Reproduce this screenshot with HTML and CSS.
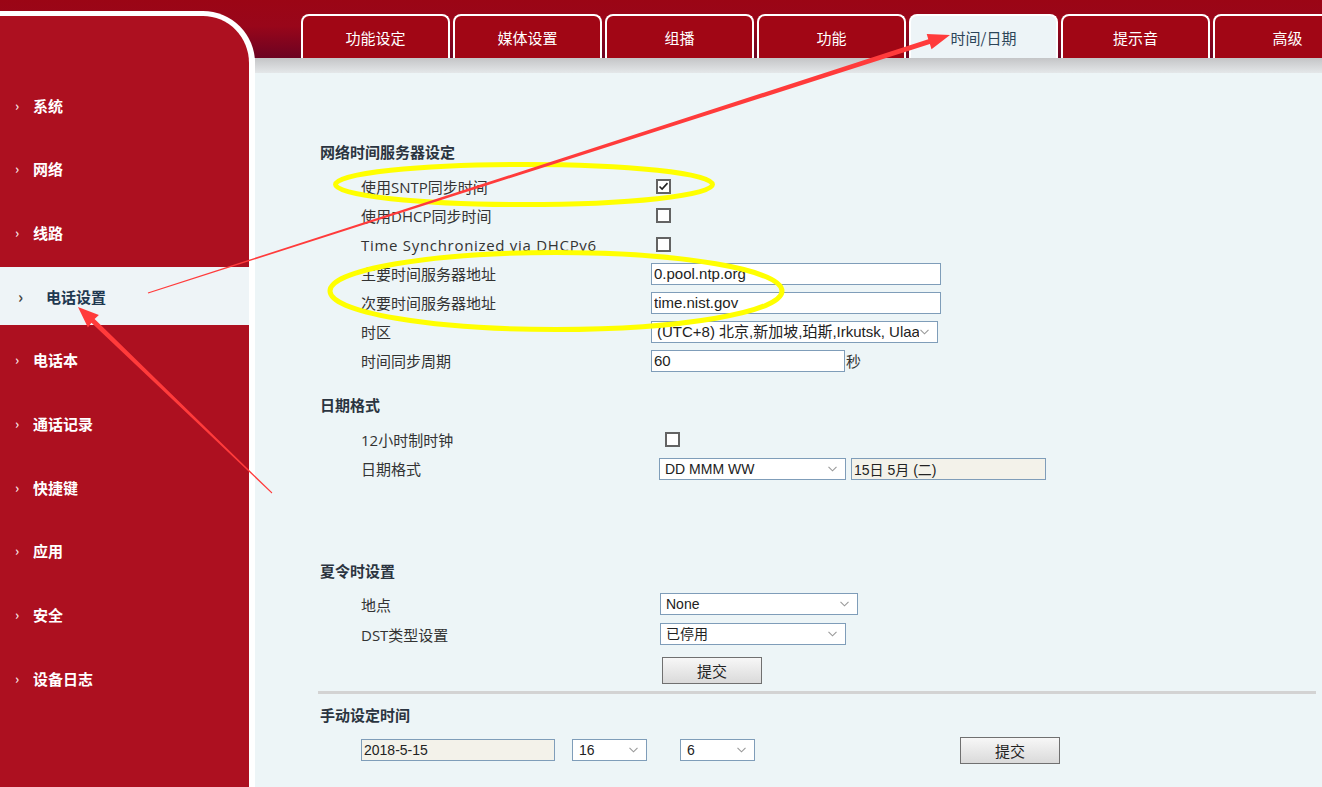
FILE: index.html
```html
<!DOCTYPE html>
<html lang="zh-CN">
<head>
  <meta charset="UTF-8">
  <title>电话设置 - 时间/日期</title>
  <link rel="stylesheet" href="styles.css">
</head>
<body>

<div class="page">
  <aside class="sidebar">
    <ul class="menu">
      <li><span class="arrow">›</span>系统</li>
      <li><span class="arrow">›</span>网络</li>
      <li><span class="arrow">›</span>线路</li>
      <li class="active"><span class="arrow">›</span>电话设置</li>
      <li><span class="arrow">›</span>电话本</li>
      <li><span class="arrow">›</span>通话记录</li>
      <li><span class="arrow">›</span>快捷键</li>
      <li><span class="arrow">›</span>应用</li>
      <li><span class="arrow">›</span>安全</li>
      <li><span class="arrow">›</span>设备日志</li>
    </ul>
  </aside>

  <div class="main">
    <ul class="tabs">
      <li>功能设定</li>
      <li>媒体设置</li>
      <li>组播</li>
      <li>功能</li>
      <li class="active">时间/日期</li>
      <li>提示音</li>
      <li>高级</li>
    </ul>
    <div class="tab-shadow"></div>

    <div class="content">
      <h3>网络时间服务器设定</h3>
      <div class="row">
        <label class="label">使用SNTP同步时间</label>
        <input type="checkbox" class="check" checked>
      </div>
      <div class="row">
        <label class="label">使用DHCP同步时间</label>
        <input type="checkbox" class="check">
      </div>
      <div class="row">
        <label class="label latin">Time Synchronized via DHCPv6</label>
        <input type="checkbox" class="check">
      </div>
      <div class="row">
        <label class="label">主要时间服务器地址</label>
        <input type="text" class="text w-server" value="0.pool.ntp.org">
      </div>
      <div class="row">
        <label class="label">次要时间服务器地址</label>
        <input type="text" class="text w-server" value="time.nist.gov">
      </div>
      <div class="row">
        <label class="label">时区</label>
        <select class="w-zone">
          <option>(UTC+8) 北京,新加坡,珀斯,Irkutsk, Ulaanbaatar</option>
        </select>
      </div>
      <div class="row">
        <label class="label">时间同步周期</label>
        <input type="text" class="text w-period" value="60"><span class="unit">秒</span>
      </div>

      <h3 class="sec-date">日期格式</h3>
      <div class="row wide">
        <label class="label">12小时制时钟</label>
        <input type="checkbox" class="check">
      </div>
      <div class="row wide">
        <label class="label">日期格式</label>
        <select class="w-format">
          <option>DD MMM WW</option>
        </select>
        <input type="text" class="text readonly w-preview" value="15日 5月 (二)" readonly>
      </div>

      <h3 class="sec-dst">夏令时设置</h3>
      <div class="row tall wider">
        <label class="label">地点</label>
        <select class="w-place"><option>None</option></select>
      </div>
      <div class="row tall wider">
        <label class="label">DST类型设置</label>
        <select class="w-dst"><option>已停用</option></select>
      </div>
      <div class="submit-line">
        <button class="btn">提交</button>
      </div>

      <hr class="divider">

      <h3 class="sec-manual">手动设定时间</h3>
      <div class="manual">
        <input type="text" class="text readonly w-date" value="2018-5-15" readonly>
        <select class="w-small"><option>16</option></select>
        <select class="w-small"><option>6</option></select>
        <button class="btn manual-btn">提交</button>
      </div>
    </div>
  </div>
</div>

<!-- screenshot markup: arrows and highlight rings -->
<svg class="marks" width="1322" height="787" viewBox="0 0 1322 787">
  <ellipse cx="524" cy="184.5" rx="188.5" ry="20" fill="none" stroke="#ffff00" stroke-width="5"/>
  <ellipse cx="556" cy="291" rx="226" ry="38.5" fill="none" stroke="#ffff00" stroke-width="5"/>
  <polygon fill="#ff3b3b" points="147.8,292.5 928.3,39.3 926.7,34.1 950,35 931.5,49.3 929.9,44.1 148.2,293.5"/>
  <polygon fill="#ff3b3b" points="272.3,492.6 94.6,319.1 98.9,315.0 78,307 87.9,327.6 91.4,322.7 271.7,493.4"/>
</svg>

</body>
</html>
```

FILE: styles.css
```css
html, body {
  margin: 0;
  height: 787px;
  overflow: hidden;
}
body {
  position: relative;
  font-family: "Noto Sans CJK SC", sans-serif;
  background: linear-gradient(#9b0515, #99061a 45%, #6c0322) top left / 100% 58px no-repeat, #edf5f7;
}
.page {
  display: flex;
  height: 787px;
}

/* left menu */
.sidebar {
  box-sizing: border-box;
  width: 255px;
  flex: none;
  margin-top: 11px;
  height: 776px;
  background-color: #ad1020;
  border-top: 5px solid #fff;
  border-right: 6px solid #fff;
  border-top-right-radius: 52px;
}
.menu {
  list-style: none;
  margin: 0;
  padding: 60px 0 0 0;
}
.menu li {
  display: flex;
  align-items: center;
  height: 58px;
  margin-bottom: 5.7px;
  padding-left: 15px;
  color: #fff;
  font-size: 15px;
  font-weight: bold;
}
.menu .arrow {
  width: 18px;
  font-size: 13px;
  color: #f3dede;
}
.menu li.active {
  background-color: #eef4f7;
  color: #1f3850;
  padding-left: 18px;
}
.menu li.active .arrow {
  width: 28px;
  color: #444;
  font-size: 16px;
}

/* tabs */
.main {
  flex: 1;
  min-width: 0;
}
.tabs {
  list-style: none;
  display: flex;
  gap: 3px;
  margin: 14px 0 0 0;
  padding: 0 0 0 46px;
  height: 44px;
  overflow: hidden;
}
.tabs li {
  box-sizing: border-box;
  flex: none;
  width: 149px;
  height: 44px;
  border: 2px solid #fff;
  border-bottom: none;
  border-radius: 8px 8px 0 0;
  background-color: #a10615;
  color: #fff;
  font-size: 15px;
  text-align: center;
  line-height: 44px;
}
.tabs li.active {
  background-color: #edf4f7;
  color: #2c4559;
}
.tab-shadow {
  height: 15px;
  background: linear-gradient(#c4c5c7, #e4e7e9);
}

/* form */
.content {
  padding: 69px 6px 0 65px;
  color: #333;
  font-size: 15px;
}
h3 {
  margin: 0 0 10px 0;
  height: 20px;
  line-height: 20px;
  font-size: 15px;
  font-weight: bold;
  color: #2b3440;
}
.sec-date { margin-top: 20px; }
.sec-dst { margin-top: 78px; margin-bottom: 8px; }
.sec-manual { margin-top: 11px; }

.row {
  display: flex;
  align-items: center;
  height: 29px;
}
.row.tall { height: 30px; }
.label {
  box-sizing: border-box;
  width: 331px;
  padding-left: 41px;
  font-family: "Open Sans", "Noto Sans CJK SC", sans-serif;
  color: #333;
}
.label.latin { letter-spacing: 0.7px; }
.row.wide .label { width: 339px; }
.row.wider .label { width: 340px; }

.check {
  appearance: none;
  -webkit-appearance: none;
  box-sizing: border-box;
  width: 15px;
  height: 15px;
  margin: 0 0 0 5px;
  border: 2px solid #636363;
  background: #fff;
}
.row.wide .check { margin-left: 6px; }
.check:checked {
  background: #fff url("data:image/svg+xml,%3Csvg xmlns='http://www.w3.org/2000/svg' width='11' height='11'%3E%3Cpath d='M1.5 5.5l2.6 2.6 5.4-6' fill='none' stroke='%23222' stroke-width='1.6'/%3E%3C/svg%3E") center no-repeat;
}

.text, select {
  box-sizing: border-box;
  height: 22px;
  margin: 0;
  border: 1px solid #7f9db9;
  background-color: #fff;
  color: #222;
  font-family: "Liberation Sans", "Noto Sans CJK SC", sans-serif;
  font-size: 15px;
  padding: 0 2px;
  outline: none;
}
select {
  appearance: none;
  -webkit-appearance: none;
  padding: 0 18px 0 5px;
  font-size: 14px;
  background: #fff url("data:image/svg+xml,%3Csvg xmlns='http://www.w3.org/2000/svg' width='9' height='6'%3E%3Cpath d='M0.5 0.8l4 4 4-4' fill='none' stroke='%23999' stroke-width='1.1'/%3E%3C/svg%3E") right 8px center no-repeat;
}
.readonly {
  background-color: #f3f2ea;
  font-size: 14px;
}
.w-server { width: 290px; }
.w-zone { width: 287px; font-size: 15px; }
.w-period { width: 194px; }
.unit { margin-left: 1px; }
.w-format { width: 187px; }
.w-preview { width: 195px; margin-left: 5px; }
.w-place { width: 198px; }
.w-dst { width: 186px; }

.submit-line {
  margin-top: 8px;
  padding-left: 342px;
}
.btn {
  box-sizing: border-box;
  width: 100px;
  height: 27px;
  border: 1px solid #707070;
  background: linear-gradient(#f7f7f7, #dadada);
  color: #222;
  font-family: "Noto Sans CJK SC", sans-serif;
  font-size: 15px;
  padding: 0;
}
.divider {
  margin: 7px 0 0 -2px;
  height: 3px;
  border: none;
  background-color: #d3d3d3;
}

.manual {
  display: flex;
  align-items: center;
  height: 30px;
  margin-top: 10px;
  padding-left: 41px;
}
.w-date { width: 194px; }
.w-small { width: 75px; padding-left: 6px; color: #222; }
.manual .w-small:first-of-type { margin-left: 17px; }
.manual .w-small + .w-small { margin-left: 33px; }
.manual-btn { margin-left: 205px; }

.marks {
  position: absolute;
  left: 0;
  top: 0;
  pointer-events: none;
}
```
